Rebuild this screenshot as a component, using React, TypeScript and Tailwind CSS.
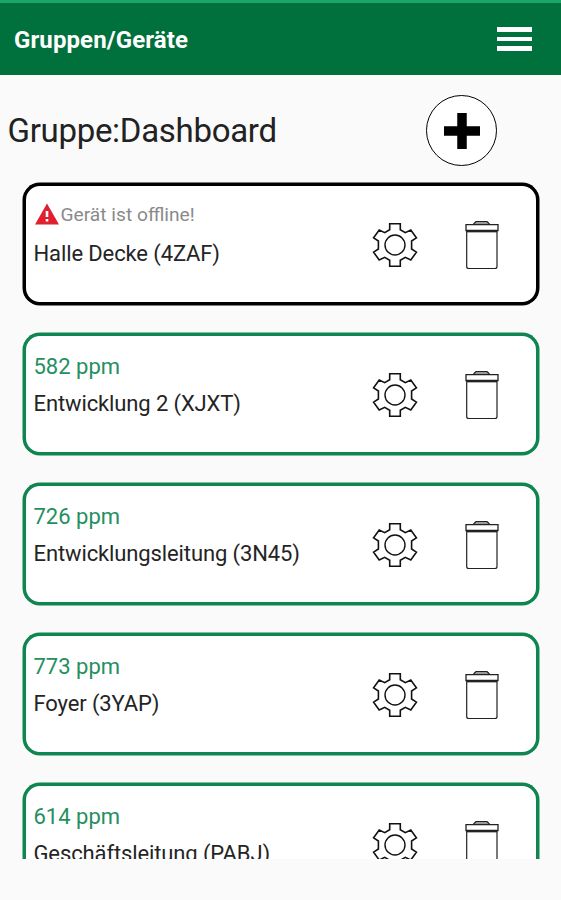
interface Device {
  name: string;
  ppm?: number;
}

const devices: Device[] = [
  { name: "Halle Decke (4ZAF)" },
  { name: "Entwicklung 2 (XJXT)", ppm: 582 },
  { name: "Entwicklungsleitung (3N45)", ppm: 726 },
  { name: "Foyer (3YAP)", ppm: 773 },
  { name: "Geschäftsleitung (PABJ)", ppm: 614 },
];

function GearIcon() {
  return (
    <svg width="48" height="48" viewBox="-24 -24 48 48" fill="none" stroke="#111" strokeWidth="1.6">
      <path d="M-5.3-21.3H5.3V-15.3L10.3-12.3L15.8-15L21.4-7.2L16.6-4V4L21.4 7.2L15.8 15L10.3 12.3L5.3 15.3V21.3H-5.3V15.3L-10.3 12.3L-15.8 15L-21.4 7.2L-16.6 4V-4L-21.4-7.2L-15.8-15L-10.3-12.3L-5.3-15.3Z" />
      <circle r="10" strokeWidth="1.4" />
    </svg>
  );
}

function TrashIcon() {
  return (
    <svg width="34" height="50" viewBox="0 0 34 50" fill="none" stroke="#222">
      <path d="M8.5 4L11 1.5H22L24.5 4" fill="#999" strokeWidth="1.2" />
      <path d="M1 4.7H33V10.5H1Z" strokeWidth="1.3" />
      <path d="M2 11.6H32" strokeWidth="1.5" />
      <path d="M1.7 11V46.5Q1.7 48.5 3.7 48.5H30Q32 48.5 32 46.5V11" strokeWidth="1.2" />
    </svg>
  );
}

function WarningIcon() {
  return (
    <svg width="26" height="22" viewBox="0 0 26 22">
      <path d="M13 .5L25 21.5H1Z" fill="#e0202e" />
      <path d="M11.7 8H14.3V14H11.7ZM11.7 16H14.3V18.5H11.7Z" fill="#fff" />
    </svg>
  );
}

function DeviceCard({ device }: { device: Device }) {
  const offline = device.ppm === undefined;

  return (
    <div
      className={`flex h-[121.5px] shrink-0 rounded-[17px] border-[3px] bg-white ring-[0.5px] ${
        offline ? "border-black ring-black" : "border-[#0f8550] ring-[#0f8550]"
      }`}
    >
      <div className="w-[345px] pl-[7.5px] pt-[13px] whitespace-nowrap">
        {offline ? (
          <div className="flex h-[37px] items-start text-[19.2px] leading-[32px] text-[#8a8a8a]">
            <span className="mt-[4px]">
              <WarningIcon />
            </span>
            <span className="ml-px">Gerät ist offline!</span>
          </div>
        ) : (
          <div className="h-[37px] text-[22px] leading-[35px] text-[#258f60]">
            {device.ppm} ppm
          </div>
        )}
        <div className="text-[22px] leading-[36px] tracking-[-0.12px] text-[#242424]">{device.name}</div>
      </div>
      <button className="mt-[35px] h-12">
        <GearIcon />
      </button>
      <button className="ml-[46px] mt-[34px] h-[50px]">
        <TrashIcon />
      </button>
    </div>
  );
}

export default function App() {
  return (
    <div className="flex h-[900px] w-[561px] flex-col overflow-hidden bg-[#fafafa] font-['Roboto',sans-serif]">
      <header className="flex h-[75px] shrink-0 items-center justify-between border-t-[3px] border-[#19a66b] bg-[#00703c] pl-[14px] pr-[29px]">
        <h1 className="pt-[2px] text-[24px] font-bold tracking-[0.1px] text-white">Gruppen/Geräte</h1>
        <button className="flex w-[35px] flex-col gap-[5px]">
          <span className="h-[5px] bg-white" />
          <span className="h-1 bg-white" />
          <span className="h-[5px] bg-white" />
        </button>
      </header>

      <div className="flex h-[107px] shrink-0 items-center justify-between pl-[7.5px] pr-16 pt-1">
        <h2 className="text-[33px] tracking-[-0.3px] text-[#222]">Gruppe:Dashboard</h2>
        <button className="flex size-[71px] items-center justify-center rounded-full border-[1.5px] border-black bg-white">
          <svg width="38" height="38" viewBox="0 0 38 38">
            <path d="M19 1V37M1 19H37" stroke="#000" strokeWidth="9.5" />
          </svg>
        </button>
      </div>

      <main className="flex h-[677px] shrink-0 flex-col gap-[28.5px] overflow-hidden pt-px pl-[23px] pr-[22.5px]">
        {devices.map((device) => (
          <DeviceCard key={device.name} device={device} />
        ))}
      </main>
    </div>
  );
}
